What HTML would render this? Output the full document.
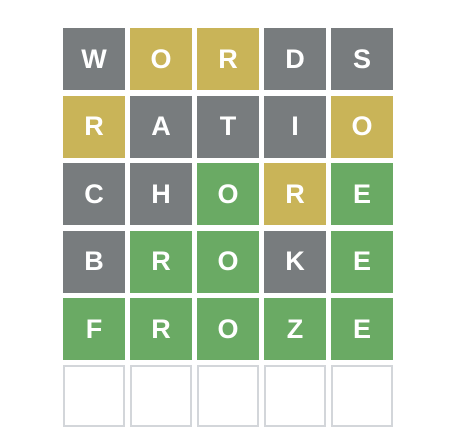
<!DOCTYPE html>
<html><head><style>
body{margin:0;width:459px;height:447px;background:#fff;position:relative;overflow:hidden;font-family:"Liberation Sans",sans-serif;}
.t{position:absolute;width:62px;height:62px;color:#fff;font-weight:bold;font-size:27px;display:flex;align-items:center;justify-content:center;box-sizing:border-box;}
.g{background:#787c7e}.y{background:#c9b458}.n{background:#6aaa64}.e{border:2px solid #d3d6da;background:#fff}
</style></head><body>
<div id="b"></div>
<script>
var rows=[["WORDS","gyygg"],["RATIO","yggggy".slice(0,5)],["CHORE","ggnyn"],["BROKE","gnngn"],["FROZE","nnnnn"],["     ","eeeee"]];
rows[1][1]="ygggy";
var tops=[28,95.5,163,230.5,298,365];
var h="";
rows.forEach(function(r,i){for(var j=0;j<5;j++){var c={g:"g",y:"y",n:"n",e:"e"}[r[1][j]];h+='<div class="t '+c+'" style="left:'+(63+67*j)+'px;top:'+tops[i]+'px">'+(r[0][j]==" "?"":r[0][j])+'</div>';}});
document.getElementById("b").innerHTML=h;
</script>
</body></html>
